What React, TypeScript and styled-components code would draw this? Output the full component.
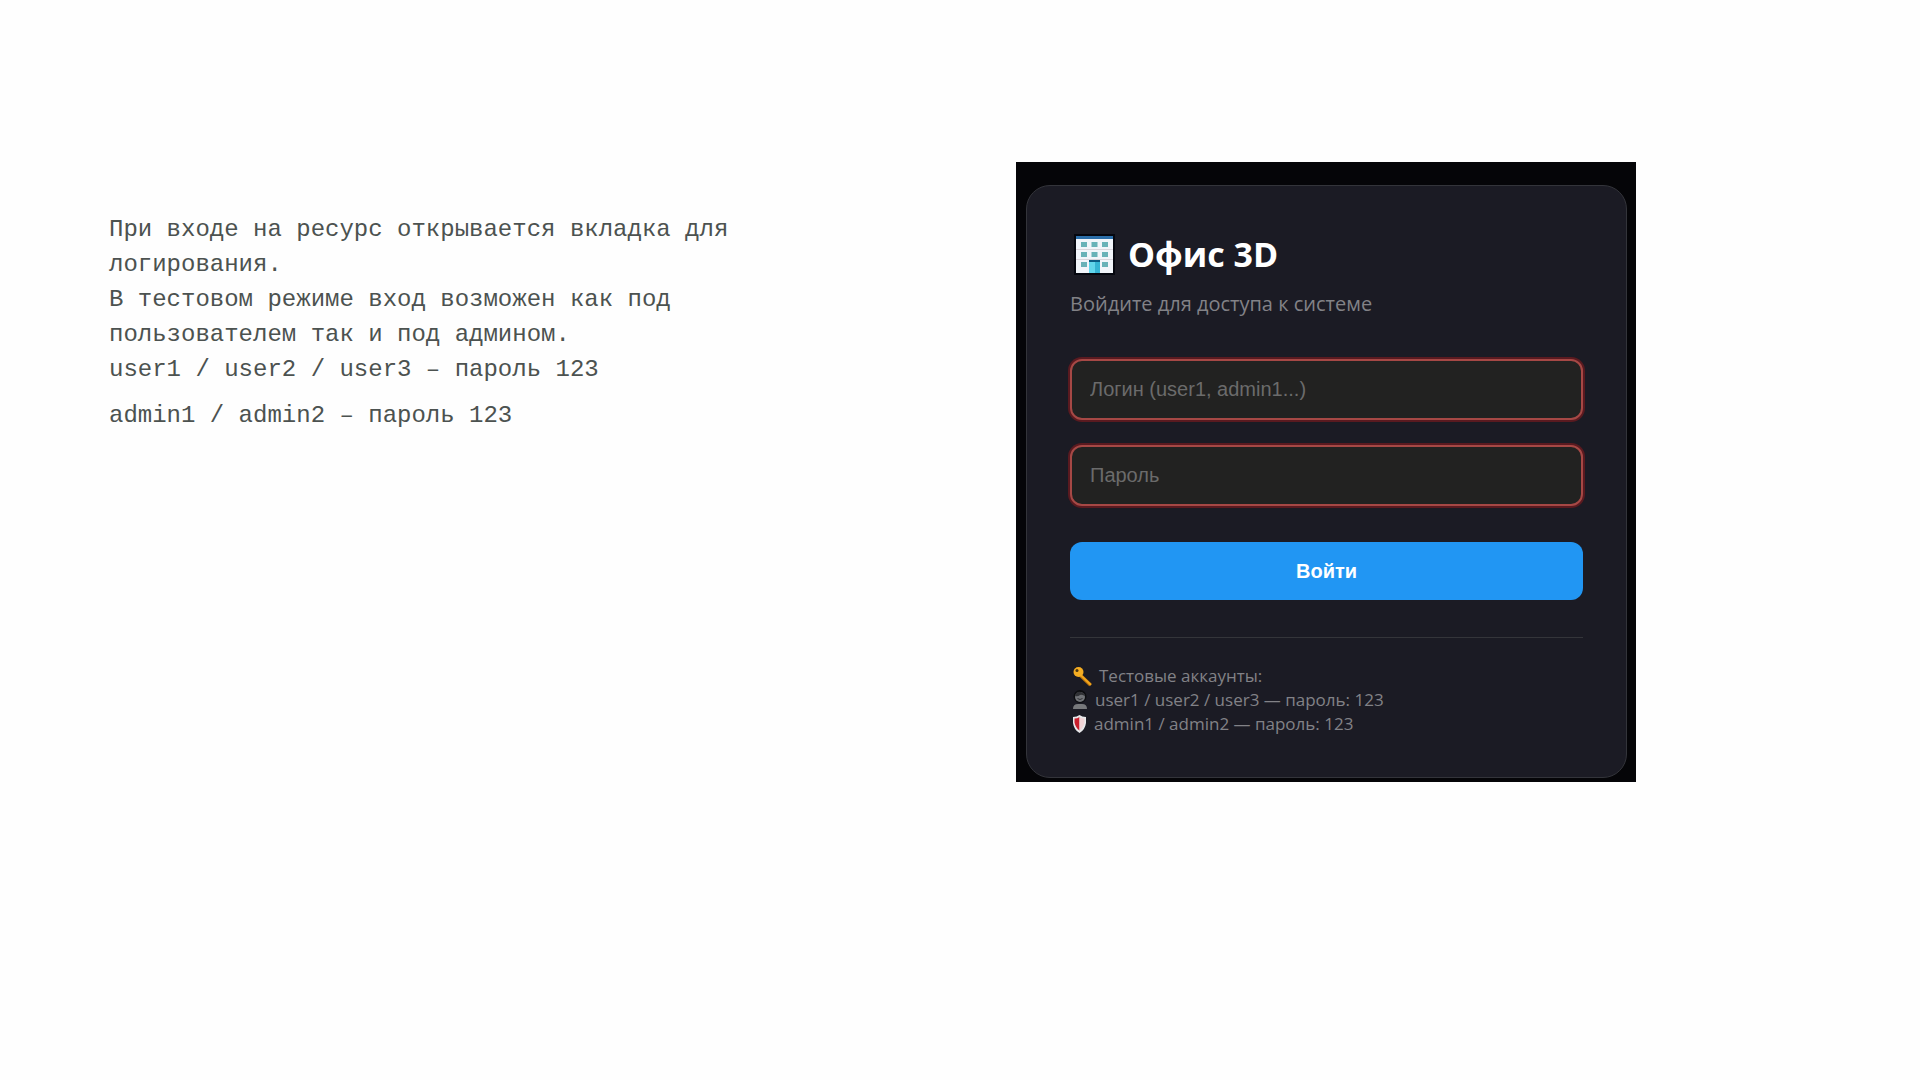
import React from "react";
import styled, { createGlobalStyle } from "styled-components";

const GlobalStyle = createGlobalStyle`
  *, *::before, *::after { box-sizing: border-box; }
  body { margin: 0; background: #fefefe; }
`;

const Slide = styled.main`
  display: grid;
  grid-template-columns: 907fr 620fr 284fr;
  align-items: start;
  padding: 162px 0 64px 109px;
`;

const Description = styled.section`
  max-width: 640px;
  padding-top: 50px;
  color: #4c5250;
  font-family: "Liberation Mono", "Courier New", monospace;
  font-size: 24px;
  line-height: 35px;
`;

const Paragraph = styled.p<{ $spaced?: boolean }>`
  margin: ${({ $spaced }) => ($spaced ? "11px 0 0" : "0")};
`;

const Backdrop = styled.section`
  padding: 23px 9px 4px 10px;
  background: #050508;
`;

const Card = styled.form`
  display: flex;
  flex-direction: column;
  padding: 42px 43px 41px;
  border: 1px solid #33343a;
  border-radius: 24px;
  background: #1b1b24;
  color: #828287;
  font-family: "Open Sans", "Segoe UI", sans-serif;
`;

const Title = styled.h1`
  display: flex;
  align-items: center;
  gap: 12px;
  margin: 0;
  color: #fff;
  font-size: 34px;
  font-weight: 700;
  line-height: 52px;
`;

const Subtitle = styled.p`
  margin: 8px 0 39px;
  font-size: 20px;
  line-height: 32px;
`;

const Field = styled.input`
  height: 61px;
  margin-bottom: 25px;
  padding: 0 18px;
  border: 2px solid #a64845;
  border-radius: 12px;
  outline: none;
  box-shadow: 0 0 0 2px #5a1a20;
  background: #222221;
  color: #ddd;
  font-family: "Liberation Sans", Arial, sans-serif;
  font-size: 20px;

  &::placeholder {
    color: #6b6b6b;
    opacity: 1;
  }
`;

const Submit = styled.button`
  height: 58px;
  margin-top: 11px;
  border: 0;
  border-radius: 12px;
  background: #2196f3;
  color: #fff;
  font-family: "Liberation Sans", Arial, sans-serif;
  font-size: 20px;
  font-weight: 700;
  cursor: pointer;
`;

const Accounts = styled.div`
  margin-top: 37px;
  padding-top: 26px;
  border-top: 1px solid #34353a;
  font-size: 17px;
  line-height: 24px;
`;

const Account = styled.div`
  display: flex;
  align-items: center;
  gap: 5px;
`;

const BuildingIcon = () => (
  <svg width="46" height="42" viewBox="0 0 46 42" aria-hidden="true">
    <rect x="4" y="1" width="41" height="41" fill="#05070f" />
    <rect x="6" y="3" width="37" height="37" fill="#f1f5fa" />
    <rect x="6" y="3" width="37" height="3" fill="#2b6ea9" />
    <path d="M6 16.500h37M6 26.500h37" stroke="#d9d5dc" />
    <path
      d="M11 9h6v5h-6zM21.500 9h6v5h-6zM32 9h6v5h-6zM11 19h6v5h-6zM21.500 19h6v5h-6zM32 19h6v5h-6zM11 29h6v5h-6zM32 29h6v5h-6z"
      fill="#68b2b8"
    />
    <rect x="19" y="28" width="11" height="12" fill="#62d6ec" />
    <rect x="25" y="29" width="5" height="11" fill="#35b4d4" />
    <rect x="19" y="27" width="11" height="2" fill="#0c5b84" />
  </svg>
);

const KeyIcon = () => (
  <svg width="24" height="24" viewBox="0 0 24 24" aria-hidden="true">
    <path d="M10 11l10.500 10" stroke="#b9720d" strokeWidth="3.500" />
    <path d="M10 10.500l11 10.500" stroke="#f2a51c" strokeWidth="2" fill="none" />
    <circle cx="8.500" cy="8" r="5" fill="#f5ad22" />
    <circle cx="7" cy="6.500" r="1.500" fill="#4a3510" />
  </svg>
);

const UserIcon = () => (
  <svg width="20" height="24" viewBox="0 0 20 24" aria-hidden="true">
    <circle cx="10" cy="8.500" r="6.500" fill="#0c0d10" />
    <circle cx="10" cy="9" r="5" fill="#707276" />
    <path d="M5 8q1-5 6-4q4 1 4 4q-4-2-5-1q-2 2-5 1z" fill="#303135" />
    <path d="M7.500 10.500q2.500 2 5 0" stroke="#303135" fill="none" />
    <path d="M3 21q0-5 5-5h4q5 0 5 5z" fill="#77787b" />
  </svg>
);

const ShieldIcon = () => (
  <svg width="19" height="24" viewBox="0 0 19 24" aria-hidden="true">
    <path d="M3 5q4 0 6.500-2q2.500 2 6.500 2v6q-1 7-6.500 10q-5.500-3-6.500-10z" fill="#e7e8ea" />
    <path d="M4.500 6.500q3 0 5-1.500v13.500q-4-3-5-8z" fill="#c91f2d" />
    <path d="M9.500 5q2 1.500 5 1.500v4q-1 5-5 8z" fill="#f0d3d5" />
  </svg>
);

export default function App() {
  return (
    <>
      <GlobalStyle />
      <Slide>
        <Description>
          <Paragraph>При входе на ресурс открывается вкладка для логирования.</Paragraph>
          <Paragraph>В тестовом режиме вход возможен как под пользователем так и под админом.</Paragraph>
          <Paragraph>user1 / user2 / user3 – пароль 123</Paragraph>
          <Paragraph $spaced>admin1 / admin2 – пароль 123</Paragraph>
        </Description>
        <Backdrop>
          <Card onSubmit={(event) => event.preventDefault()}>
            <Title><BuildingIcon />Офис 3D</Title>
            <Subtitle>Войдите для доступа к системе</Subtitle>
            <Field type="text" aria-label="Логин" placeholder="Логин (user1, admin1...)" />
            <Field type="password" aria-label="Пароль" placeholder="Пароль" />
            <Submit type="submit">Войти</Submit>
            <Accounts>
              <Account><KeyIcon />Тестовые аккаунты:</Account>
              <Account><UserIcon />user1 / user2 / user3 — пароль: 123</Account>
              <Account><ShieldIcon />admin1 / admin2 — пароль: 123</Account>
            </Accounts>
          </Card>
        </Backdrop>
      </Slide>
    </>
  );
}
